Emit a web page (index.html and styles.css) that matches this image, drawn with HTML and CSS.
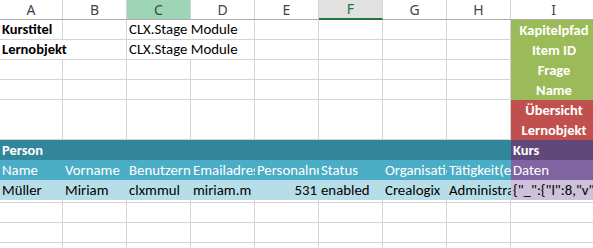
FILE: index.html
```html
<!DOCTYPE html>
<html lang="de">
<head>
<meta charset="utf-8">
<title>Sheet</title>
<link rel="stylesheet" href="styles.css">
</head>
<body>
<div class="sheet">
  <!-- column headers -->
  <div class="ch">A</div>
  <div class="ch">B</div>
  <div class="ch ch-active">C</div>
  <div class="ch">D</div>
  <div class="ch">E</div>
  <div class="ch ch-sel">F</div>
  <div class="ch">G</div>
  <div class="ch">H</div>
  <div class="ch">I</div>

  <!-- row 1 -->
  <div class="c b">Kurstitel</div>
  <div class="c"></div>
  <div class="c s2">CLX.Stage Module</div>
  <div class="c"></div>
  <div class="c"></div>
  <div class="c"></div>
  <div class="c"></div>
  <div class="c hd green">Kapitelpfad</div>

  <!-- row 2 -->
  <div class="c b s2">Lernobjekt</div>
  <div class="c s2">CLX.Stage Module</div>
  <div class="c"></div>
  <div class="c"></div>
  <div class="c"></div>
  <div class="c"></div>
  <div class="c hd green">Item ID</div>

  <!-- row 3 -->
  <div class="c"></div><div class="c"></div><div class="c"></div><div class="c"></div>
  <div class="c"></div><div class="c"></div><div class="c"></div><div class="c"></div>
  <div class="c hd green">Frage</div>

  <!-- row 4 -->
  <div class="c"></div><div class="c"></div><div class="c"></div><div class="c"></div>
  <div class="c"></div><div class="c"></div><div class="c"></div><div class="c"></div>
  <div class="c hd green">Name</div>

  <!-- rows 5-6 -->
  <div class="c r2"></div><div class="c r2"></div><div class="c r2"></div><div class="c r2"></div>
  <div class="c r2"></div><div class="c r2"></div><div class="c r2"></div><div class="c r2"></div>
  <div class="c hd red">Übersicht</div>
  <div class="c hd red">Lernobjekt</div>

  <!-- row 7 -->
  <div class="c b s8 person">Person</div>
  <div class="c b kurs">Kurs</div>

  <!-- row 8 -->
  <div class="c lbl">Name</div>
  <div class="c lbl">Vorname</div>
  <div class="c lbl">Benutzername</div>
  <div class="c lbl">Emailadresse</div>
  <div class="c lbl">Personalnummer</div>
  <div class="c lbl">Status</div>
  <div class="c lbl">Organisation</div>
  <div class="c lbl">Tätigkeit(en)</div>
  <div class="c daten">Daten</div>

  <!-- row 9 -->
  <div class="c val">Müller</div>
  <div class="c val">Miriam</div>
  <div class="c val">clxmmul</div>
  <div class="c val">miriam.m</div>
  <div class="c val num">531</div>
  <div class="c val">enabled</div>
  <div class="c val">Crealogix</div>
  <div class="c val">Administrator</div>
  <div class="c json">{"_":{"l":8,"v":"eyJ0eXBlIjoiY291cnNlIn0="}}</div>

  <!-- row 10 (short) -->
  <div class="c"></div><div class="c"></div><div class="c"></div><div class="c"></div>
  <div class="c"></div><div class="c"></div><div class="c"></div><div class="c"></div><div class="c"></div>

  <!-- rows 11-13 -->
  <div class="c"></div><div class="c"></div><div class="c"></div><div class="c"></div>
  <div class="c"></div><div class="c"></div><div class="c"></div><div class="c"></div><div class="c"></div>
  <div class="c"></div><div class="c"></div><div class="c"></div><div class="c"></div>
  <div class="c"></div><div class="c"></div><div class="c"></div><div class="c"></div><div class="c"></div>
  <div class="c last"></div><div class="c last"></div><div class="c last"></div><div class="c last"></div>
  <div class="c last"></div><div class="c last"></div><div class="c last"></div><div class="c last"></div><div class="c last"></div>
</div>
</body>
</html>
```
FILE: styles.css
```css
html, body {
  margin: 0;
  padding: 0;
  background: #ffffff;
  overflow: hidden;
}

.sheet {
  display: grid;
  grid-template-columns: 63px repeat(7, 64px) 86px;
  grid-template-rows: repeat(10, 20px) 3px 20px 20px 5px;
  width: 593px;
  height: 248px;
  overflow: hidden;
  font-family: Carlito, Lato, "Liberation Sans", sans-serif;
  font-size: 14.8px;
  color: #000;
}

.ch {
  box-sizing: border-box;
  border-right: 1px solid #d4d4d4;
  border-bottom: 1px solid #ababab;
  background: #ffffff;
  color: #444444;
  font-family: "Noto Sans", "Liberation Sans", sans-serif;
  font-size: 14px;
  line-height: 19px;
  text-align: center;
}

.ch-active {
  background: #9fd5b7;
  color: #2f4f3a;
}

.ch-sel {
  background: #e1e1e1;
  color: #217346;
  border-bottom: 2px solid #217346;
  line-height: 18px;
}

.c {
  box-sizing: border-box;
  border-right: 1px solid #d4d4d4;
  border-bottom: 1px solid #d4d4d4;
  padding: 0 2px;
  line-height: 19px;
  white-space: nowrap;
  overflow: hidden;
}

.last { border-bottom: 0; }

.b { font-weight: bold; font-size: 14.5px; }
.s2 { grid-column: span 2; }
.s8 { grid-column: span 8; }
.r2 { grid-row: span 2; }

.hd {
  border: 0;
  color: #ffffff;
  font-weight: bold;
  font-size: 14.5px;
  text-align: center;
  line-height: 20px;
}

.green { background: #9bbb59; }
.red { background: #c0504d; }

.person {
  border: 0;
  background: #31869b;
  color: #ffffff;
  line-height: 20px;
}

.kurs {
  border: 0;
  background: #60497a;
  color: #ffffff;
  line-height: 20px;
}

.lbl {
  border: 0;
  background: #4bacc6;
  color: #ffffff;
  line-height: 20px;
}

.daten {
  border: 0;
  background: #8064a2;
  color: #ffffff;
  line-height: 20px;
}

.val {
  border: 0;
  background: #b7dee8;
  line-height: 20px;
}

.num { text-align: right; }

.json {
  border: 0;
  background: #ccc0da;
  line-height: 20px;
}
```
